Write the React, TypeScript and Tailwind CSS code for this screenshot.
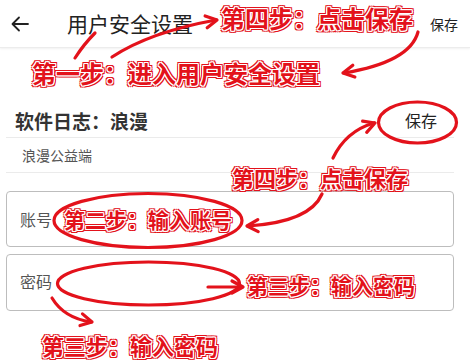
import React from "react";

const note =
  "absolute whitespace-nowrap font-bold leading-none text-[#e3121b] [font-family:'Noto_Sans_CJK_SC',sans-serif] [text-shadow:1px_0_0_#fff,-1px_0_0_#fff,0_1px_0_#fff,0_-1px_0_#fff,1px_1px_0_#fff,-1px_-1px_0_#fff,1px_-1px_0_#fff,-1px_1px_0_#fff,2px_0_0_#e3121b,-2px_0_0_#e3121b,0_2px_0_#e3121b,0_-2px_0_#e3121b,2px_2px_0_#e3121b,-2px_-2px_0_#e3121b,2px_-2px_0_#e3121b,-2px_2px_0_#e3121b]";

function Head({ x, y, angle }: { x: number; y: number; angle: number }) {
  return (
    <path
      d="M0 0 L-11 -6 M0 0 L-11 6"
      transform={`translate(${x} ${y}) rotate(${angle})`}
      stroke="#e3121b"
      strokeWidth={3.2}
      strokeLinecap="round"
      fill="none"
    />
  );
}

export default function App() {
  return (
    <div className="relative w-[470px] h-[360px] overflow-hidden bg-white [font-family:'Noto_Sans_CJK_SC',sans-serif] text-[#222]">
      {/* header */}
      <div className="flex h-[48px] items-center border-b border-[#ececec] shadow-[0_1px_2px_rgba(0,0,0,0.06)] pl-[10px] pr-[12px]">
        <svg width="20" height="20" viewBox="0 0 20 20" className="shrink-0">
          <path d="M18 10 H3 M9 3.5 L2.5 10 L9 16.5" stroke="#222" strokeWidth="1.8" fill="none" strokeLinecap="round" strokeLinejoin="round" />
        </svg>
        <div className="ml-[37px] text-[21px] leading-none text-[#222]">用户安全设置</div>
        <div className="flex-1" />
        <div className="text-[14px] leading-none text-[#222]">保存</div>
      </div>

      <div className="px-[6px] pt-[55px]">
        <div className="flex items-center justify-between pl-[9px] pr-[27px] h-[34px]">
          <div className="text-[19px] font-bold leading-none text-[#333]">软件日志：浪漫</div>
          <div className="text-[16px] leading-none text-[#222]">保存</div>
        </div>
        <div className="mr-[10px] h-px bg-[#ebebeb]" />
        <div className="flex items-center h-[34px] pl-[16px] text-[14px] text-[#555]">浪漫公益端</div>
        <div className="mr-[10px] h-px bg-[#ebebeb]" />

        <div className="mt-[18px] mr-[10px] flex h-[56px] items-center rounded-[4px] border border-[#bdbdbd] pl-[13px] text-[16px] text-[#555]">
          账号
        </div>
        <div className="mt-[7px] mr-[10px] flex h-[57px] items-center rounded-[4px] border border-[#bdbdbd] pl-[13px] text-[16px] text-[#555] pb-[4px]">
          密码
        </div>
      </div>

      {/* annotation drawings */}
      <svg className="pointer-events-none absolute left-0 top-0" width="470" height="360" viewBox="0 0 470 360">
        <g stroke="#e3121b" strokeWidth="3.2" fill="none" strokeLinecap="round">
          <path d="M75 58 Q84 44 95 33" />
          <path d="M112 57 Q150 32 216 20" />
          <path d="M418 32 Q410 62 344 73" />
          <path d="M333 158 Q346 131 374 123" />
          <path d="M322 194 Q310 222 248 226" />
          <path d="M208 287 L241 287" />
          <path d="M52 298 Q64 318 91 322" />
          <ellipse cx="417.5" cy="122.5" rx="39" ry="20.5" />
          <ellipse cx="148" cy="220.5" rx="94" ry="27" />
          <ellipse cx="148.5" cy="283.5" rx="91" ry="21.5" />
        </g>
        <Head x={217} y={20} angle={-10} />
        <Head x={343} y={73} angle={170} />
        <Head x={375} y={123} angle={-20} />
        <Head x={247} y={226} angle={178} />
        <Head x={243} y={287} angle={0} />
        <Head x={92} y={322} angle={12} />
      </svg>

      <div className={`${note} left-[221px] top-[6px] text-[24px]`}>第四步：点击保存</div>
      <div className={`${note} left-[32px] top-[61px] text-[24px]`}>第一步：进入用户安全设置</div>
      <div className={`${note} left-[232px] top-[166px] text-[22px]`}>第四步：点击保存</div>
      <div className={`${note} left-[64px] top-[209px] text-[21px]`}>第二步：输入账号</div>
      <div className={`${note} left-[247px] top-[275px] text-[21px]`}>第三步：输入密码</div>
      <div className={`${note} left-[42px] top-[334px] text-[22px]`}>第三步：输入密码</div>
    </div>
  );
}
